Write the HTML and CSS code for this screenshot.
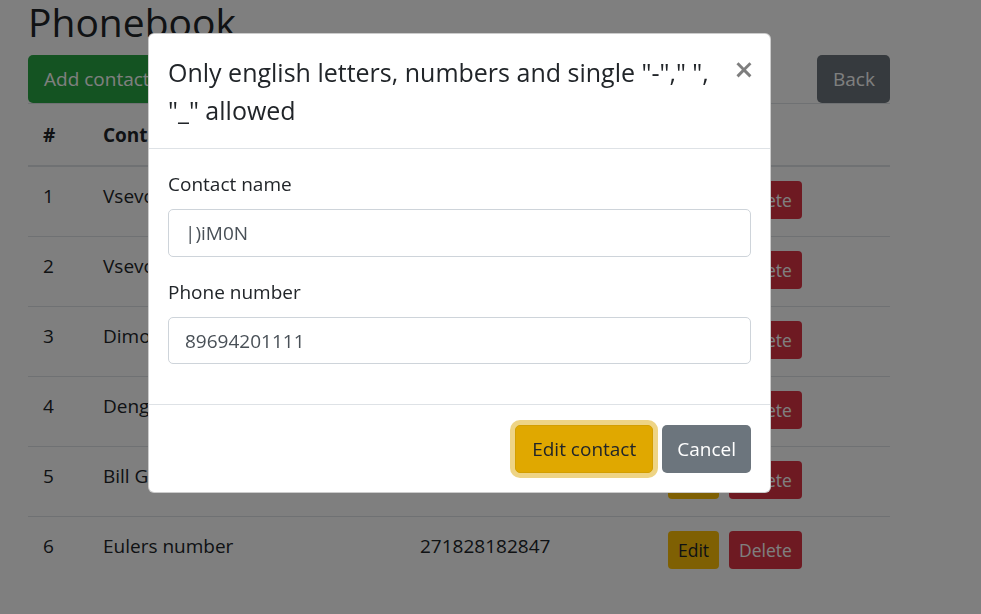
FILE: index.html
```html
<!DOCTYPE html>
<html lang="en">
<head>
<meta charset="utf-8">
<title>Phonebook</title>
<link rel="stylesheet" href="styles.css">
</head>
<body>
<div class="container">
  <h2 class="title">Phonebook</h2>
  <div class="toolbar">
    <button class="btn btn-success">Add contact</button>
    <button class="btn btn-secondary">Back</button>
  </div>
  <table class="table">
    <thead>
      <tr><th class="c-num">#</th><th class="c-name">Contact name</th><th class="c-phone">Phone number</th><th class="c-act"></th></tr>
    </thead>
    <tbody>
      <tr><td>1</td><td>Vsevolod Ivanov</td><td>89161234567</td><td><span class="btn-sm btn-warning">Edit</span><span class="btn-sm btn-danger">Delete</span></td></tr>
      <tr><td>2</td><td>Vsevolod Petrov</td><td>89267654321</td><td><span class="btn-sm btn-warning">Edit</span><span class="btn-sm btn-danger">Delete</span></td></tr>
      <tr><td>3</td><td>Dimon</td><td>89694201111</td><td><span class="btn-sm btn-warning">Edit</span><span class="btn-sm btn-danger">Delete</span></td></tr>
      <tr><td>4</td><td>Deng Xiaoping</td><td>86100000000</td><td><span class="btn-sm btn-warning">Edit</span><span class="btn-sm btn-danger">Delete</span></td></tr>
      <tr><td>5</td><td>Bill Gates</td><td>14255550100</td><td><span class="btn-sm btn-warning">Edit</span><span class="btn-sm btn-danger">Delete</span></td></tr>
      <tr><td>6</td><td>Eulers number</td><td>271828182847</td><td><span class="btn-sm btn-warning">Edit</span><span class="btn-sm btn-danger">Delete</span></td></tr>
    </tbody>
  </table>
</div>

<div class="backdrop"></div>

<div class="modal">
  <div class="modal-header">
    <h5 class="modal-title">Only english letters, numbers and single "-"," ", "_" allowed</h5>
    <span class="close">&times;</span>
  </div>
  <div class="modal-body">
    <div class="form-group">
      <label class="label">Contact name</label>
      <div class="form-control">|)iM0N</div>
    </div>
    <div class="form-group">
      <label class="label">Phone number</label>
      <div class="form-control">89694201111</div>
    </div>
  </div>
  <div class="modal-footer">
    <span class="btn btn-warning focus">Edit contact</span>
    <span class="btn btn-secondary">Cancel</span>
  </div>
</div>
</body>
</html>
```

FILE: styles.css
```css
* { box-sizing: border-box; }
html, body { margin: 0; padding: 0; }
body {
  font-family: "Open Sans", "Noto Sans", sans-serif;
  font-size: 19px;
  line-height: 30px;
  color: #212529;
  background: #fff;
  width: 981px;
  height: 614px;
  overflow: hidden;
}
.container {
  width: 862px;
  margin-left: 28px;
}
.title {
  font-size: 39px;
  font-weight: 500;
  line-height: 48px;
  margin: -2px 0 9px 0;
}
.toolbar {
  display: flex;
  justify-content: space-between;
}
.btn {
  display: inline-block;
  font-family: inherit;
  font-size: 19px;
  line-height: 30px;
  padding: 8px 15px;
  border: 1px solid transparent;
  border-radius: 5px;
  height: 48px;
}
.btn-success { background: #28a745; color: #fff; }
.btn-warning { background: #ffc107; color: #212529; }
.btn-secondary { background: #6c757d; color: #fff; }
.toolbar .btn-secondary { padding: 8px 14px 8px 15px; width: 73px; }
.table {
  width: 862px;
  border-collapse: collapse;
  margin-top: 0;
}
.table th, .table td {
  text-align: left;
  padding: 15px;
  border-top: 1px solid #dee2e6;
  vertical-align: top;
}
.table th { font-weight: 700; padding-top: 16px; padding-bottom: 15px; }
.table thead th { border-bottom: 2px solid #dee2e6; }
.table td { height: 70px; padding-top: 14px; padding-bottom: 15px; }
.c-num { width: 60px; }
.c-name { width: 317px; }
.c-phone { width: 248px; }
.btn-sm {
  display: inline-block;
  font-size: 17.5px;
  line-height: 26px;
  padding: 6px 10px;
  border-radius: 4px;
  height: 38px;
  vertical-align: top;
}
.btn-danger { background: #dc3545; color: #fff; margin-left: 10px; }
.backdrop {
  position: fixed;
  inset: 0;
  background: rgba(0, 0, 0, 0.5);
}
.modal {
  position: absolute;
  left: 148px;
  top: 33px;
  width: 623px;
  background: #fff;
  border: 1px solid rgba(0, 0, 0, 0.2);
  border-radius: 6px;
}
.modal-header {
  display: flex;
  align-items: flex-start;
  padding: 20px 19px 19px 19px;
  border-bottom: 1px solid #dee2e6;
}
.modal-title {
  margin: 0;
  font-size: 25px;
  font-weight: 500;
  line-height: 37.5px;
  flex: 1;
}
.close {
  width: 30px;
  text-align: center;
  font-size: 34px;
  font-weight: 600;
  line-height: 1;
  color: #000;
  opacity: 0.5;
  margin-right: -8px;
  margin-top: -2px;
}
.modal-body {
  padding: 20px 19px;
}
.form-group { margin-bottom: 20px; }
.label {
  display: block;
  line-height: 30px;
  margin-bottom: 10px;
}
.form-control {
  height: 47.5px;
  border: 1px solid #ced4da;
  border-radius: 5px;
  padding: 8px 16px;
  color: #495057;
  line-height: 30px;
}
.modal-footer {
  display: flex;
  justify-content: flex-end;
  align-items: center;
  gap: 9px;
  padding: 20px 19px 19px;
  border-top: 1px solid #dee2e6;
}
.modal-footer .btn { height: 47.5px; }
.modal-footer .btn-warning { padding: 8px 16px; }
.modal-footer .btn-secondary { padding: 8px 14px; }
.btn-warning.focus {
  background: #e0a800;
  border-color: #d39e00;
  box-shadow: 0 0 0 5px rgba(222, 170, 12, 0.5);
}
```
